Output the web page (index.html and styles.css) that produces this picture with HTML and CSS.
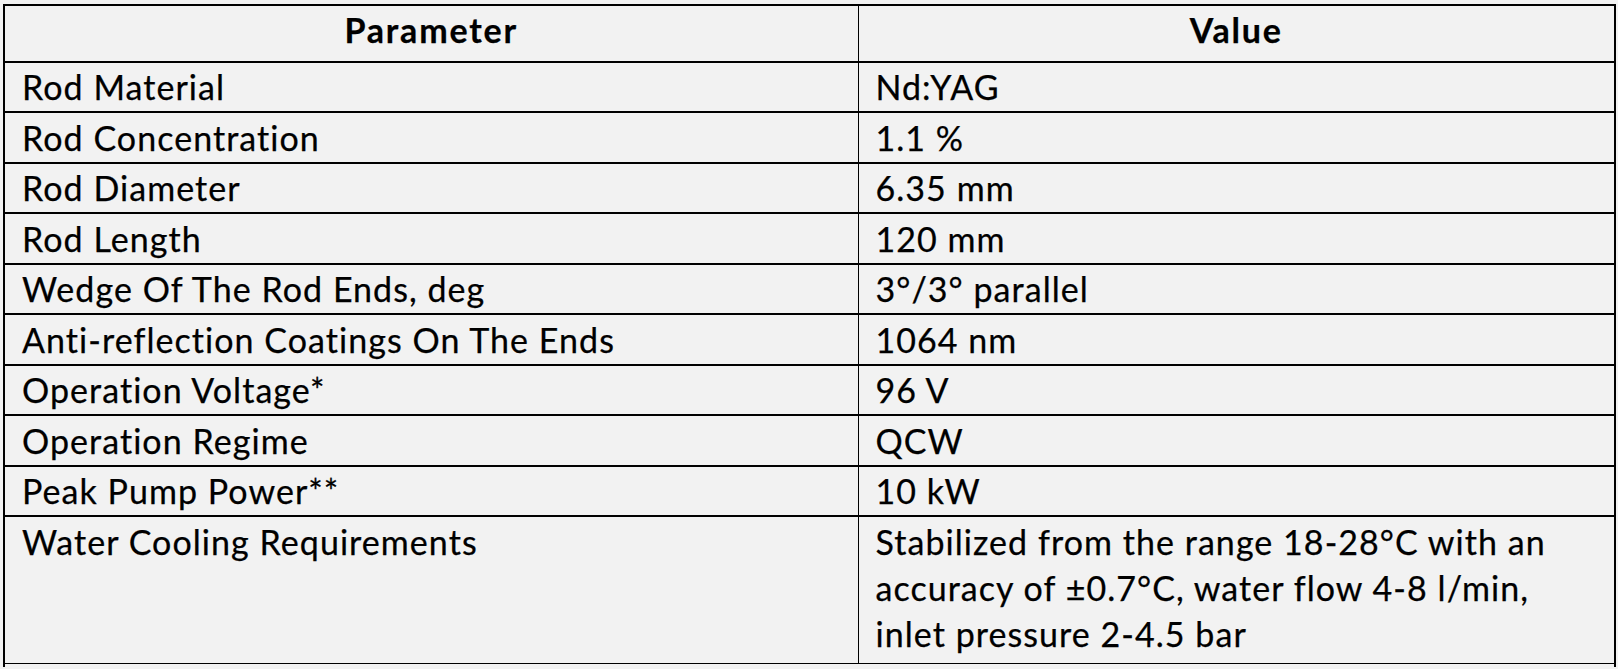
FILE: index.html
```html
<!DOCTYPE html>
<html>
<head>
<meta charset="utf-8">
<link rel="stylesheet" href="styles.css">
</head>
<body>
<table class="spec">
  <colgroup><col class="c1"><col class="c2"></colgroup>
  <thead>
    <tr><th>Parameter</th><th>Value</th></tr>
  </thead>
  <tbody>
    <tr><td>Rod Material</td><td>Nd:YAG</td></tr>
    <tr><td>Rod Concentration</td><td>1.1 %</td></tr>
    <tr><td>Rod Diameter</td><td>6.35 mm</td></tr>
    <tr><td>Rod Length</td><td>120 mm</td></tr>
    <tr><td>Wedge Of The Rod Ends, deg</td><td>3°/3° parallel</td></tr>
    <tr><td>Anti-reflection Coatings On The Ends</td><td>1064 nm</td></tr>
    <tr><td>Operation Voltage*</td><td>96 V</td></tr>
    <tr><td>Operation Regime</td><td>QCW</td></tr>
    <tr><td>Peak Pump Power**</td><td>10 kW</td></tr>
    <tr class="multi"><td>Water Cooling Requirements</td><td>Stabilized from the range 18-28°C with an<br>accuracy of ±0.7°C, water flow 4-8 l/min,<br>inlet pressure 2-4.5 bar</td></tr>
    <tr class="notes"><td colspan="2"></td></tr>
  </tbody>
</table>
</body>
</html>
```
FILE: styles.css
```css
html, body {
  margin: 0;
  padding: 0;
  background: #f2f2f2;
  overflow: hidden;
}
body {
  padding: 4px 0 0 3px;
  font-family: "Lato", "Open Sans", sans-serif;
  color: #000;
}
.spec {
  border-collapse: collapse;
  table-layout: fixed;
  width: 1611px;
  font-size: 34px;
  letter-spacing: 1.05px;
  -webkit-text-stroke: 0.25px #000;
}
.c1 { width: 854px; }
.c2 { width: 757px; }
.spec th, .spec td {
  border-top: 2px solid #000;
  border-bottom: 2px solid #000;
  line-height: 46px;
  text-align: left;
  vertical-align: top;
  white-space: nowrap;
  padding: 1.5px 17px 1px 17px;
}
.spec th:first-child, .spec td:first-child {
  border-left: 2px solid #000;
  border-right: 1px solid #000;
}
.spec th:last-child, .spec td:last-child {
  border-right: 2px solid #000;
}
.spec th {
  font-weight: 700;
  text-align: center;
  letter-spacing: 1.8px;
  padding-top: 1.2px;
  padding-bottom: 7.8px;
}
.spec .multi td {
  padding-bottom: 6px;
  border-bottom: 1px solid #000;
}
.spec .notes td {
  border-top: 1px solid #000;
  border-bottom: 0;
  border-left: 2px solid #000;
  border-right: 2px solid #000;
  height: 3px;
  padding: 0;
}
```
